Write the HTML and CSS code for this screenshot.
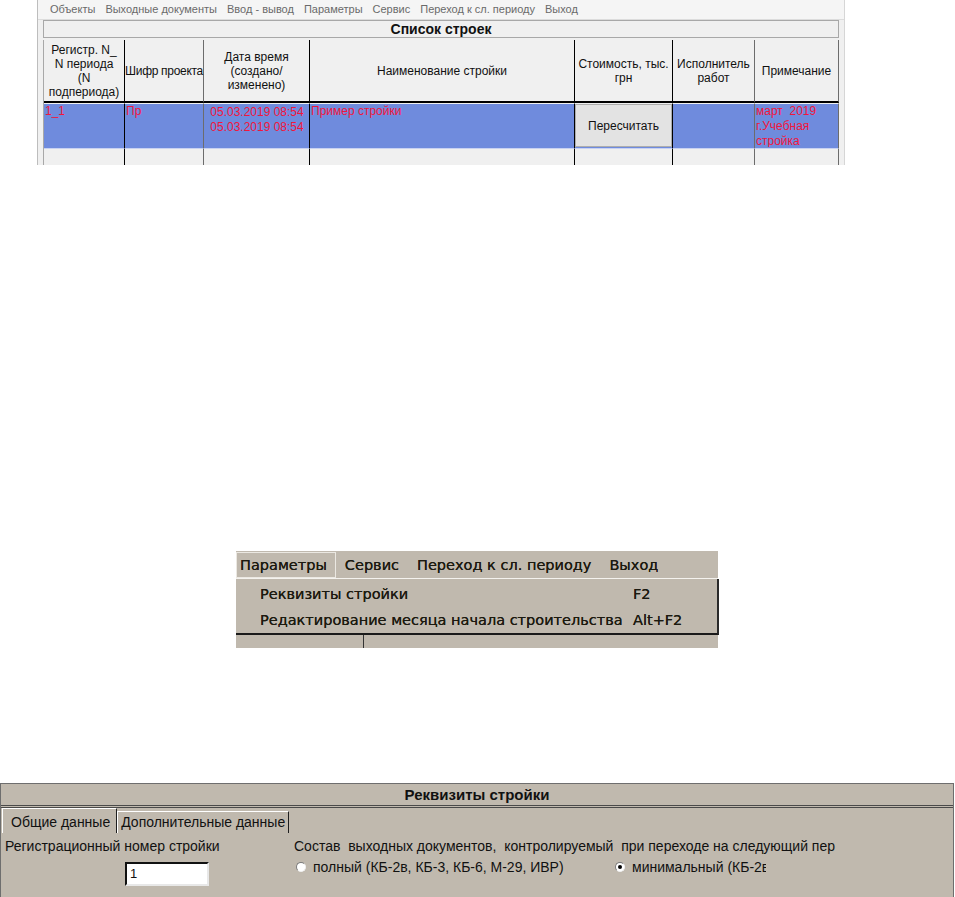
FILE: index.html
```html
<!DOCTYPE html>
<html lang="ru">
<head>
    <meta charset="UTF-8">
    <title>Список строек</title>
    <link rel="stylesheet" href="styles.css">
</head>
<body>
    <!-- main window: list of sites -->
    <div class="list-win">
        <div class="app-menu">
            <span>Объекты</span>
            <span>Выходные документы</span>
            <span>Ввод - вывод</span>
            <span>Параметры</span>
            <span>Сервис</span>
            <span>Переход к сл. периоду</span>
            <span>Выход</span>
        </div>
        <div class="list-title">Список строек</div>
        <table class="grid">
            <thead>
                <tr>
                    <th class="c1 dark">Регистр. N_<br>N периода<br>(N<br>подпериода)</th>
                    <th class="c2 grey nowrap">Шифр проекта</th>
                    <th class="c3 dark">Дата время<br>(создано/<br>изменено)</th>
                    <th class="c4 dark">Наименование стройки</th>
                    <th class="c5 dark">Стоимость, тыс.<br>грн</th>
                    <th class="c6 grey">Исполнитель<br>работ</th>
                    <th class="c7 grey">Примечание</th>
                </tr>
            </thead>
            <tbody>
                <tr class="sel">
                    <td class="dark"><div class="cell">1_1</div></td>
                    <td class="grey"><div class="cell">Пр</div></td>
                    <td class="dark"><div class="cell dates">05.03.2019 08:54<br>05.03.2019 08:54</div></td>
                    <td class="dark"><div class="cell">Пример стройки</div></td>
                    <td class="dark btn-cell"><button>Пересчитать</button></td>
                    <td class="grey"></td>
                    <td class="grey"><div class="cell">март&nbsp; 2019<br>г.Учебная<br>стройка</div></td>
                </tr>
                <tr class="blank">
                    <td class="dark"></td>
                    <td class="grey"></td>
                    <td class="dark"></td>
                    <td class="dark"></td>
                    <td class="dark"></td>
                    <td class="grey"></td>
                    <td class="grey"></td>
                </tr>
            </tbody>
        </table>
    </div>

    <!-- "Параметры" menu opened -->
    <div class="menu-win">
        <div class="classic-menu">
            <span class="open">Параметры</span>
            <span>Сервис</span>
            <span>Переход к сл. периоду</span>
            <span>Выход</span>
        </div>
        <div class="dropdown">
            <span>Реквизиты стройки</span><span>F2</span>
            <span>Редактирование месяца начала строительства</span><span>Alt+F2</span>
        </div>
        <div class="under-menu"></div>
    </div>

    <!-- site properties form -->
    <div class="req-win">
        <div class="req-title">Реквизиты стройки</div>
        <div class="tabs">
            <span class="tab active">Общие данные</span>
            <span class="tab">Дополнительные данные</span>
        </div>
        <div class="tab-body">
            <div class="reg-col">
                <div>Регистрационный номер стройки</div>
                <div class="field">1</div>
            </div>
            <div class="docs-col">
                <div>Состав&nbsp; выходных документов,&nbsp; контролируемый&nbsp; при переходе на следующий пер</div>
                <div class="radios">
                    <label class="opt"><span class="radio"></span>полный (КБ-2в, КБ-3, КБ-6, М-29, ИВР)</label>
                    <label class="opt"><span class="radio checked"></span>минимальный (КБ-2в</label>
                </div>
            </div>
        </div>
    </div>
</body>
</html>
```

FILE: styles.css
```css
body {
    margin: 0;
    background-color: #fff;
    font-family: "Liberation Sans", Arial, sans-serif;
}

/* ---------- list window ---------- */

.list-win {
    box-sizing: border-box;
    width: 808px;
    height: 165px;
    margin-left: 37px;
    overflow: hidden;
    background-color: #f0f0f0;
    border-left: 1px solid #bdbdbd;
    border-right: 1px solid #d6d6d6;
}

.app-menu {
    display: flex;
    gap: 10px;
    height: 19px;
    padding-left: 12px;
    background-color: #f5f5f5;
    border-bottom: 1px solid #dcdcdc;
    font-size: 11px;
    line-height: 19px;
    color: #6a6a6a;
}

.list-title {
    box-sizing: border-box;
    width: 796px;
    height: 18px;
    margin: 0 0 2px 5px;
    border: 1px solid #a8a8a8;
    font-size: 14px;
    font-weight: bold;
    line-height: 16px;
    text-align: center;
    color: #111;
}

.grid {
    box-sizing: border-box;
    width: 796px;
    margin-left: 5px;
    table-layout: fixed;
    border-collapse: separate;
    border-spacing: 0;
    border-left: 1px solid #a8a8a8;
    font-size: 12px;
}

.grid th, .grid td {
    box-sizing: border-box;
    padding: 0;
}

.grid .dark { border-right: 1px solid #000; }
.grid .grey { border-right: 1px solid #6c6c6c; }

.grid th {
    height: 63px;
    border-bottom: 2px solid #000;
    font-weight: normal;
    line-height: 14px;
    color: #111;
    text-align: center;
    vertical-align: middle;
}

.grid th.nowrap {
    white-space: nowrap;
    letter-spacing: -0.3px;
}

.c1 { width: 81px; }
.c2 { width: 79px; }
.c3 { width: 106px; }
.c4 { width: 265px; }
.c5 { width: 98px; }
.c6 { width: 82px; }
.c7 { width: 84px; }

.sel td {
    height: 45px;
    border-top: 1px solid #f0f0f0;
    border-bottom: 1px solid #c8d2f2;
    background-color: #6f8bdd;
    color: #f2163c;
    vertical-align: top;
}

.sel .cell {
    height: 43px;
    overflow: hidden;
    padding-left: 1px;
    line-height: 15px;
}

.sel .dates {
    padding-top: 1px;
    text-align: center;
}

.btn-cell button {
    display: block;
    width: 97px;
    height: 43px;
    margin: 0;
    background-color: #e3e3e3;
    border: 1px solid #adadad;
    font-family: "Liberation Sans", Arial, sans-serif;
    font-size: 12px;
    color: #111;
}

.blank td {
    height: 20px;
}

/* ---------- opened menu ---------- */

.menu-win {
    width: 482px;
    height: 97px;
    margin: 386px 0 0 236px;
    background-color: #c0b9ae;
    font-family: "DejaVu Sans", Tahoma, sans-serif;
    font-size: 14.5px;
    color: #1c1a10;
    text-shadow: 0 0 0.3px #1c1a10;
}

.classic-menu {
    display: flex;
    height: 27px;
    border-bottom: 1px solid #f4f2ee;
}

.classic-menu span {
    padding: 0 8px;
    line-height: 25px;
    margin-top: 1px;
    border: 1px solid transparent;
}

.classic-menu .open {
    padding-left: 3px;
    border-color: #ebe8e2;
}

.dropdown {
    display: grid;
    grid-template-columns: 373px auto;
    width: 457px;
    padding: 2px 0 0 24px;
    border-right: 2px solid #2a2a2a;
    border-bottom: 2px solid #1a1a1a;
    line-height: 26px;
}

.under-menu {
    width: 0;
    height: 13px;
    margin-left: 127px;
    border-left: 1px solid #333;
}

/* ---------- properties form ---------- */

.req-win {
    box-sizing: border-box;
    width: 954px;
    height: 114px;
    margin-top: 135px;
    overflow: hidden;
    background-color: #c0b9ae;
    border: 1px solid #6e6e6e;
    border-bottom: none;
    font-size: 14px;
    color: #111;
}

.req-title {
    height: 21px;
    border-bottom: 3px double #4a4a4a;
    font-size: 15px;
    font-weight: bold;
    line-height: 22px;
    text-align: center;
}

.tabs {
    display: flex;
    align-items: flex-end;
    height: 25px;
    padding-left: 1px;
}

.tab {
    box-sizing: border-box;
    height: 22px;
    padding: 0 3px 0 3px;
    line-height: 21px;
    border-left: 1px solid #fff;
    border-top: 1px solid #fff;
    border-right: 1px solid #1e1e1e;
}

.tab.active {
    height: 25px;
    padding: 0 6px 0 8px;
    line-height: 26px;
}

.tab-body {
    display: flex;
    padding: 5px 0 0 4px;
}

.reg-col {
    width: 289px;
}

.field {
    box-sizing: border-box;
    width: 84px;
    height: 24px;
    margin: 8px 0 0 120px;
    padding-left: 3px;
    background-color: #fff;
    border: 2px solid;
    border-color: #111 #e8e8e8 #e8e8e8 #111;
    font-size: 13px;
    line-height: 20px;
}

.docs-col {
    white-space: nowrap;
}

.radios {
    display: flex;
    width: 472px;
    margin-top: 5px;
    overflow: hidden;
}

.opt {
    display: flex;
    align-items: center;
    flex-shrink: 0;
    gap: 7px;
    padding-left: 2px;
}

.opt:first-child {
    width: 317px;
}

.radio {
    position: relative;
    box-sizing: border-box;
    width: 10px;
    height: 10px;
    border-radius: 50%;
    background-color: #fff;
    border: 1px solid;
    border-color: #7a7a7a #f0f0f0 #f0f0f0 #7a7a7a;
}

.radio.checked::after {
    content: "";
    position: absolute;
    left: 2px;
    top: 2px;
    width: 4px;
    height: 4px;
    border-radius: 50%;
    background-color: #000;
}
```
